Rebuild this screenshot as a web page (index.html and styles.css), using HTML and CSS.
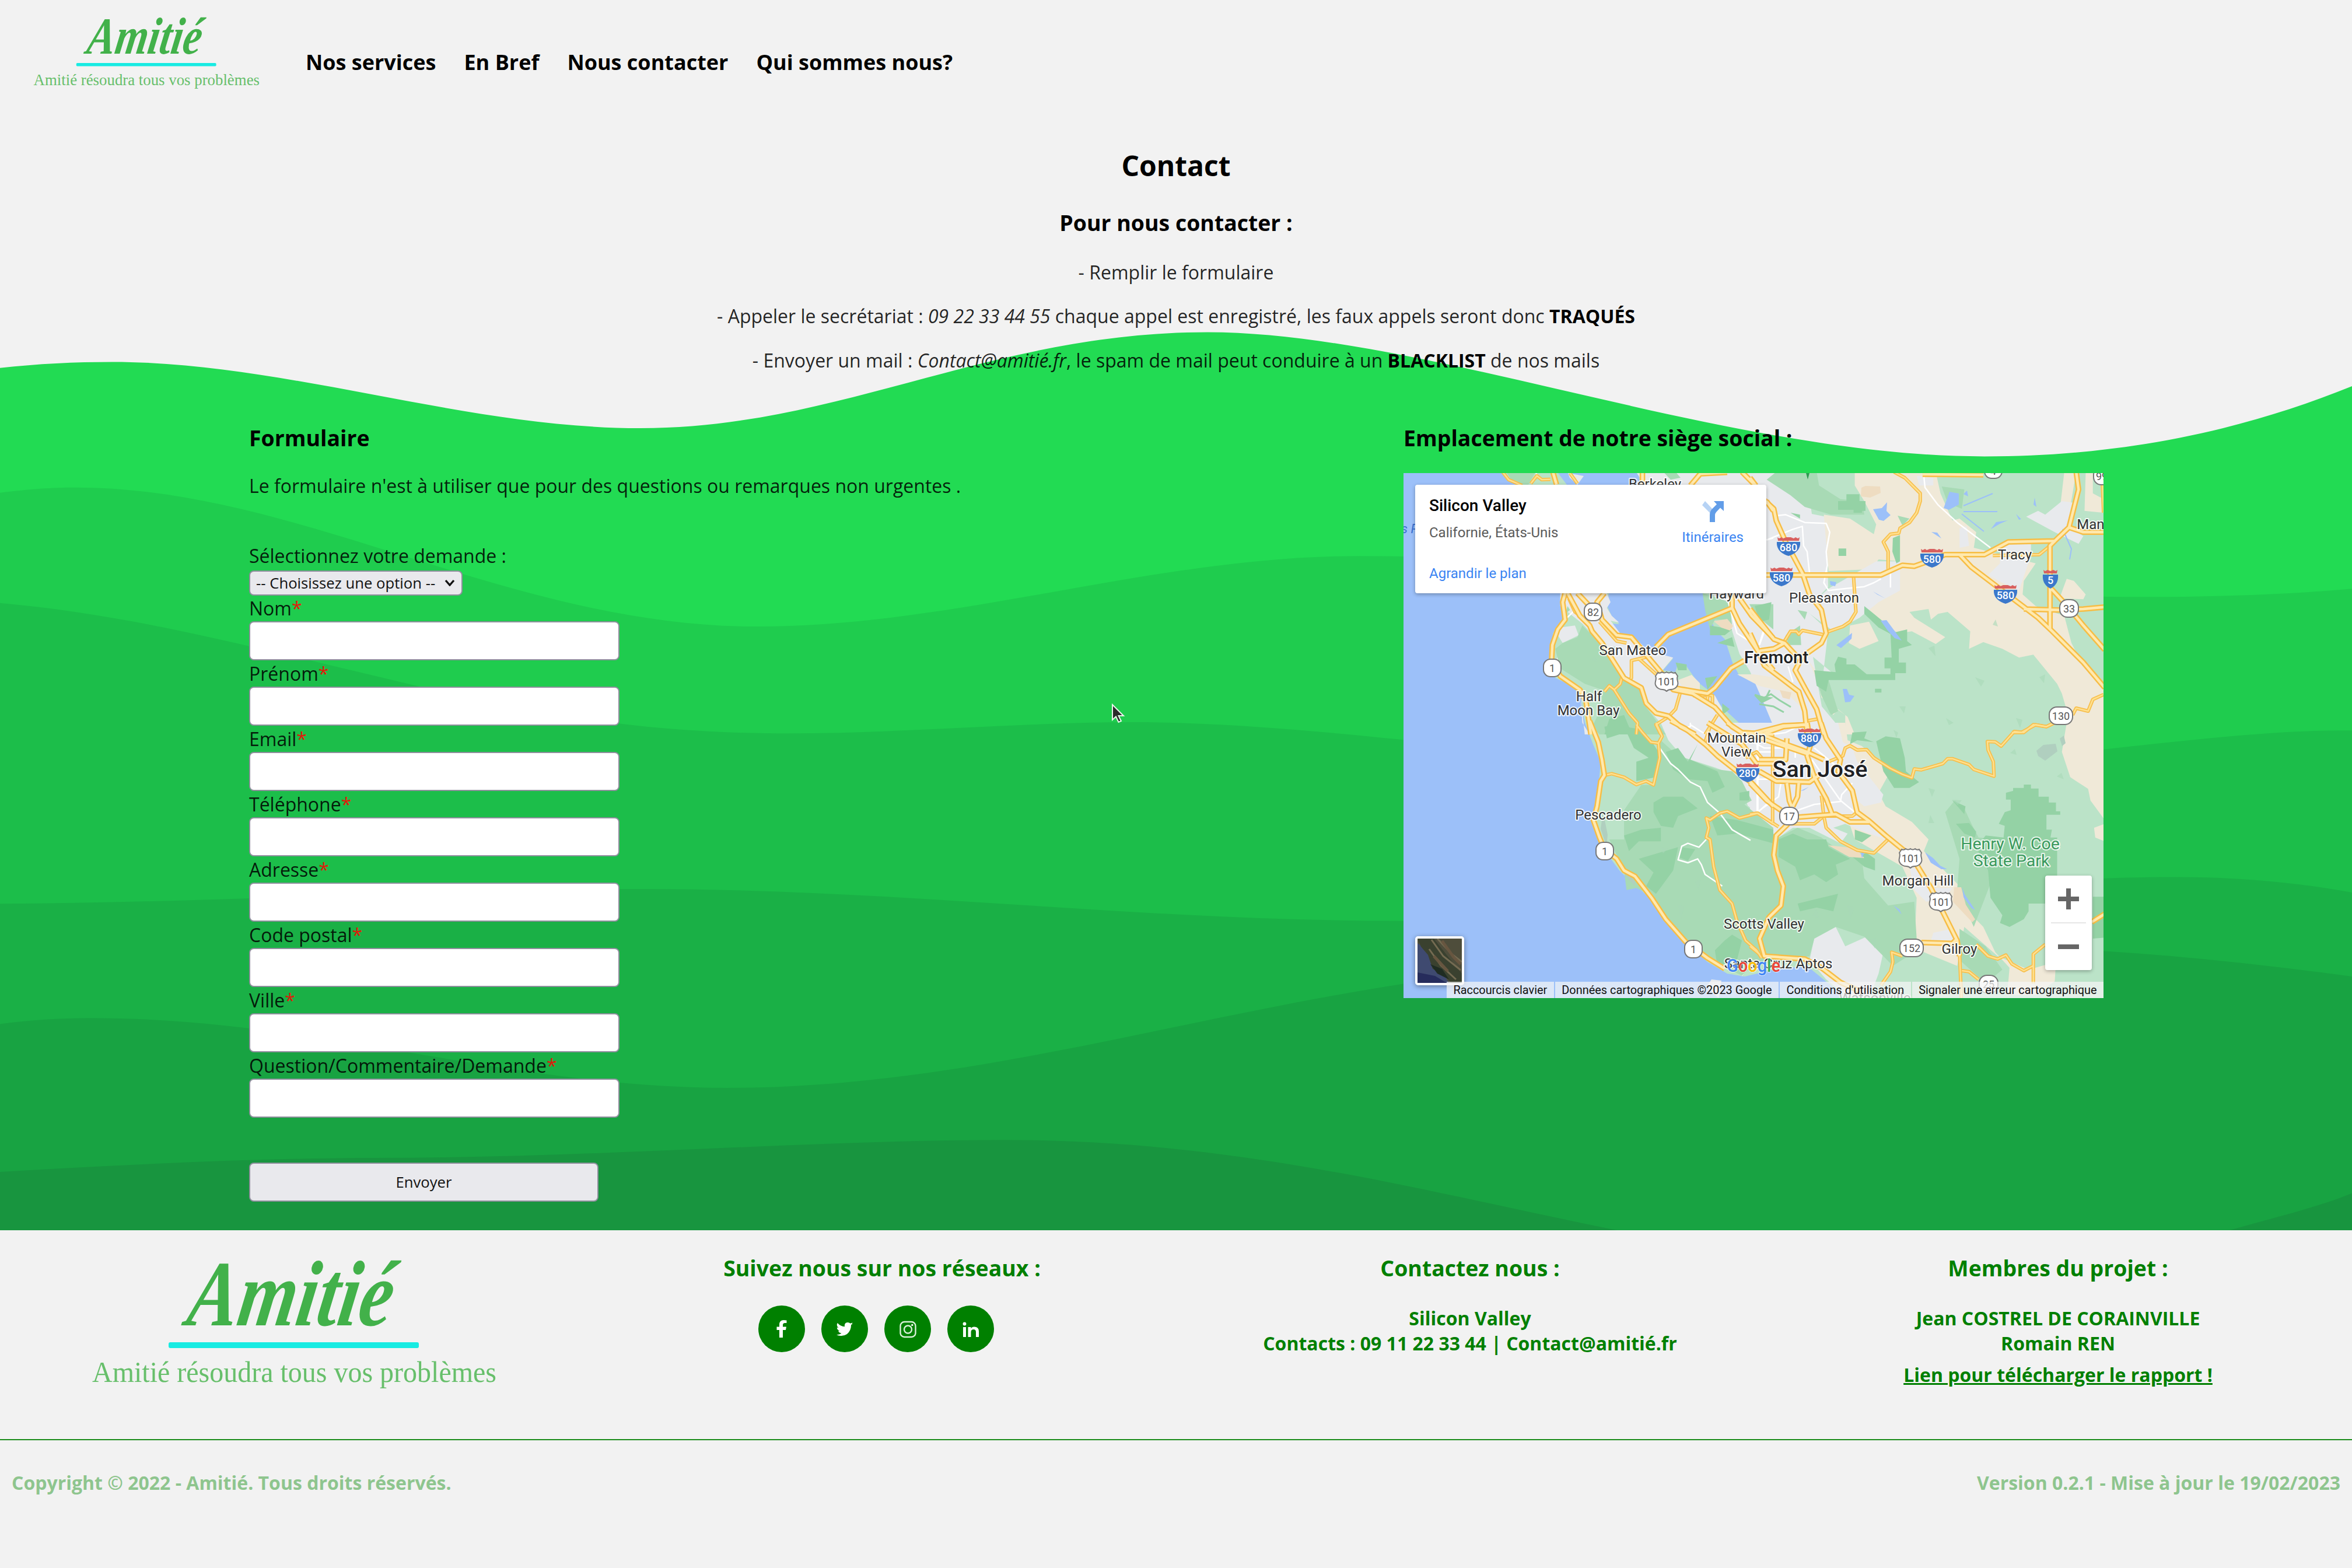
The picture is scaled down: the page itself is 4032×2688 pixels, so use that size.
FILE: index.html
```html
<!DOCTYPE html>
<html lang="fr">
<head>
<meta charset="utf-8">
<title>Amitié - Contact</title>
<link rel="stylesheet" href="styles.css">
</head>
<body>
<svg class="defs" aria-hidden="true">
  <symbol id="logo" viewBox="0 0 700 220" overflow="visible">
    <text class="logo-name" transform="translate(163 114) skewX(-9)" textLength="350" lengthAdjust="spacingAndGlyphs">Amitié</text>
    <rect x="135" y="143" width="429" height="10" rx="3" fill="#18ebe2"/>
    <text class="logo-tag" x="4" y="211" textLength="693" lengthAdjust="spacingAndGlyphs">Amitié résoudra tous vos problèmes</text>
  </symbol>
  <symbol id="interstate" viewBox="-20 -16 40 32">
    <path d="M-19-16l3 2 4-2 3 2 5-2 4-1 4 1 5 2 3-2 4 2 3-2-1 6h-36z" fill="#d8605f"/>
    <path d="M-20-8h40c1 11-6 20-20 24-14-4-21-13-20-24z" fill="#3b78cb"/>
  </symbol>
  <symbol id="us-route" viewBox="-22 -18 44 36">
    <path d="M-15-15q4 2 7-1 4 3 8 0 4 3 8 0 3 3 7 1l4 6c-3 5 2 10 0 15-2 6-8 8-12 8-3 0-5 1-7 3-2-2-4-3-7-3-4 0-10-2-12-8-2-5 3-10 0-15z" fill="#fff" stroke="#777" stroke-width="2"/>
  </symbol>
</svg>

<header class="header">
  <svg class="header-logo" viewBox="0 0 700 220"><use href="#logo"/></svg>
  <nav class="nav">
    <a>Nos services</a><a>En Bref</a><a>Nous contacter</a><a>Qui sommes nous?</a>
  </nav>
</header>

<main class="main">
  <svg class="waves" viewBox="0 0 1568 820.6" preserveAspectRatio="none">
    <path fill="#22db53" d="M0 245.3C25 242.5 50 241.3 75 241.3C190 241.3 310 285.5 427 285.5C560 285.5 660 221.5 805 221.5C950 221.5 1150 304.3 1323 304.3C1420 304.3 1500 285 1568 257.5V821H0Z"/>
    <path fill="#1fcc4e" d="M0 328.5C20 326 35 325 50 325C200 325 340 417.7 504 417.7C640 417.7 770 370.7 905 370.7C1100 370.7 1260 398 1430 398C1480 398 1530 396 1568 392.5V821H0Z"/>
    <path fill="#1cbe4a" d="M0 402C90 410 170 432 281 458C370 479 440 489 526 489C600 489 680 481.5 755 481.5C900 481.5 1050 515 1250 512C1370 508 1480 486 1568 487V821H0Z"/>
    <path fill="#1ab046" d="M0 602.5C140 602 280 592.7 430 592.7C600 592.7 760 614 935 614C1100 614 1300 584.7 1450 584.7C1495 584.7 1535 589 1568 595V821H0Z"/>
    <path fill="#18a342" d="M0 682.7C20 680 40 678.7 60 678.7C210 678.7 340 725.3 485 725.3C640 725.3 780 680 935 656C1080 635 1200 630 1330 631C1420 633 1500 642 1568 651V821H0Z"/>
    <path fill="#18953f" d="M0 781.3C90 776 180 772 250 772C400 772 540 760 670 760C830 760 960 797 1080 820.6H1485C1515 812 1545 805 1568 795.5V821H0Z"/>
  </svg>

  <section class="intro">
    <h2>Contact</h2>
    <h3>Pour nous contacter :</h3>
    <p>- Remplir le formulaire</p>
    <p>- Appeler le secrétariat : <em>09 22 33 44 55</em> chaque appel est enregistré, les faux appels seront donc <strong>TRAQUÉS</strong></p>
    <p>- Envoyer un mail : <em>Contact@amitié.fr</em>, le spam de mail peut conduire à un <strong>BLACKLIST</strong> de nos mails</p>
  </section>

  <div class="columns">
    <section class="form-col">
      <h3>Formulaire</h3>
      <p class="note">Le formulaire n'est à utiliser que pour des questions ou remarques non urgentes .</p>
      <form class="form">
        <div class="select-label">Sélectionnez votre demande :</div>
        <div class="select"><span>-- Choisissez une option --</span>
          <svg viewBox="0 0 18 12"><path d="M2 2l7 8 7-8" fill="none" stroke="#111" stroke-width="3.4"/></svg></div>
        <label class="field"><span>Nom<b>*</b></span><input type="text"></label>
        <label class="field"><span>Prénom<b>*</b></span><input type="text"></label>
        <label class="field"><span>Email<b>*</b></span><input type="text"></label>
        <label class="field"><span>Téléphone<b>*</b></span><input type="text"></label>
        <label class="field"><span>Adresse<b>*</b></span><input type="text"></label>
        <label class="field"><span>Code postal<b>*</b></span><input type="text"></label>
        <label class="field"><span>Ville<b>*</b></span><input type="text"></label>
        <label class="field"><span>Question/Commentaire/Demande<b>*</b></span><input type="text"></label>
        <button class="send" type="button">Envoyer</button>
      </form>
    </section>

    <section class="map-col">
      <h3>Emplacement de notre siège social :</h3>
      <div class="map">
        <svg class="map-canvas" viewBox="0 0 1200 900">
          <defs>
            <g id="major" class="line">
              <g transform="matrix(.42092 0 0 .33333 -26 -32)">
                <path d="M730 713L780 830 820 880 830 910 870 970 910 1050 960 1150 1030 1200 1050 1280 1090 1330 1140 1345 1190 1400 1250 1440"/>
                <path d="M880 713L850 760 870 850 930 930 990 940 1050 1030 1110 1120 1160 1210 1240 1230 1330 1300 1400 1400 1450 1440"/>
                <path d="M720 713L710 760 720 850 690 900 668 980 665 1060 700 1140 780 1210 805 1270 825 1440"/>
                <path d="M1400 790L1140 925 1090 990M1450 1060L1395 1100 1330 1200 1300 1230 1160 1200"/>
                <path d="M1400 700V790L1430 870 1510 1020 1568 1110M1430 740L1480 830 1568 945M770 713L820 780"/>
                <path d="M670 90L685 155M1035 90V170M1230 160L1270 100 1380 92M1440 90L1495 160M1540 240L1568 290"/>
              </g>
              <g transform="matrix(.40816 0 0 .33333 594 -32)">
                <path d="M60 235L100 280 110 340 150 450 220 610 250 720 300 800 320 920 300 970 220 1040 190 1110 230 1200 280 1310 310 1440"/>
                <path d="M60 620H550L640 570 690 575 760 545 820 515 985 515 1085 450 1280 445 1340 375 1380 180 1370 90M1340 375L1400 400H1490"/>
                <path d="M880 515L930 580 1070 710 1210 840 1270 910 1400 1070 1490 1200M1280 445L1260 470V900M1265 690L1340 790 1400 880 1490 1005M1150 795L1300 800 1400 795 1490 785M725 102L980 105"/>
                <path d="M0 920L30 1000 60 1085 130 1150 205 1220 230 1320 240 1440M0 795L100 950 145 970 205 1050M40 1010L100 1000 145 970M0 1440L140 1395 240 1390M0 120L25 160"/>
              </g>
              <g transform="matrix(.42092 0 0 .33333 -26 428)">
                <path d="M820 -10L855 100 870 190 880 270 865 300 850 430 835 500 860 590 880 650 930 700 960 760 1005 790 1075 905 1130 1010 1210 1125 1300 1210 1370 1265"/>
                <path d="M1150 -10L1210 30 1290 110 1340 170 1420 250 1480 310 1568 430M1380 0L1440 50 1568 60M1300 0L1440 110 1500 210H1568M1510 250L1568 290"/>
              </g>
              <g transform="matrix(.40816 0 0 .33333 594 428)">
                <path d="M230 10L140 20 50 60 150 110 240 150 310 190M298 0L320 80 380 190 370 250 430 350 450 460 500 505 570 580 680 690 760 850 870 1120 880 1200"/>
                <path d="M240 0L255 110 240 170 270 280 320 390 345 470M0 60L240 160M40 250L110 300 250 305 290 270M205 305L200 380 180 430M155 310L165 400 175 430M0 310L70 400 130 450"/>
                <path d="M205 485L360 470 420 510 500 510M160 520L110 580 100 680 115 760 140 840 130 940 80 1000 40 1110 60 1200 230 1215 300 1260 380 1335 460 1380M720 1130L850 1135 870 1110"/>
                <path d="M1435 1025L1490 983M155 80L150 190 40 190"/>
              </g>
            </g>
            <g id="minor" class="line">
              <g transform="matrix(.42092 0 0 .33333 -26 -32)">
                <path d="M880 1220L900 1190 920 1210 945 1180 950 1150M920 1210L950 1270 980 1330 1015 1380 1010 1440M1060 1040L990 1060 990 1150 970 1170M1190 1220L1170 1310 1140 1350 1090 1390 1110 1440"/>
                <path d="M465 90L490 130 545 160M580 150L605 110 625 130 660 128M740 97L770 150M735 740L760 810 820 870M1300 1240V1280M1020 1050L1090 1130M860 860L930 960 970 970"/>
                <path d="M1340 1340L1290 1440M1240 1240L1320 1240V1290"/>
              </g>
              <g transform="matrix(.40816 0 0 .33333 594 -32)">
                <path d="M605 90L650 120 715 200 715 240 700 300 670 350 630 380 625 405 590 410 560 450 580 500V590M435 630L445 810 420 860 390 885 320 915M320 930L260 915 220 905 205 925 195 910 170 910 140 970M1020 520L1215 515 1260 470"/>
                <path d="M1485 1235L1440 1260 1420 1320 1370 1305 1355 1340M1280 1380L1245 1400 1200 1390 1140 1430 1100 1430M1480 150L1485 300M240 1370L290 1360"/>
              </g>
              <g transform="matrix(.42092 0 0 .33333 -26 428)">
                <path d="M880 270L910 262 960 280 1010 318 1050 300 1080 320 1105 180 1100 105 1115 70 1090 0M1010 10L1035 50 1070 100 1100 105"/>
                <path d="M1568 520L1505 465 1430 490 1380 455 1350 465 1310 500 1295 490 1305 540 1295 590 1310 600 1325 740 1350 860 1400 930 1420 1020 1455 1120 1500 1170 1520 1210M1455 180L1500 150 1540 210M1310 20L1290 100"/>
              </g>
              <g transform="matrix(.40816 0 0 .33333 594 428)">
                <path d="M95 60V510M300 375L310 480 320 540 380 610 450 655 520 670 580 600M0 470L30 465 120 535M160 520H270L310 480H430L450 460M330 200L390 170 400 130 420 118 450 140 490 138 520 180 590 235 640 265 680 283 690 238 720 242 810 210 830 185 850 185 920 215 940 240 1025 275 1022 200 1000 140 997 97 1030 98 1055 120 1110 45 1150 50 1190 10 1245 20 1270 5"/>
                <path d="M640 1200L595 1180 600 1230 590 1280 550 1350M950 1140L1000 1200 1040 1215 1075 1195 1100 1240 1150 1275 1190 1250 1190 1190 1240 1140M1190 1250V1340M880 1180L888 1420M890 1275L920 1280 960 1320M0 1150L40 1190"/>
              </g>
            </g>
          </defs>
          <rect width="1200" height="900" fill="#9cc0f9"/>
          <!-- land -->
          <path fill="#bbe3c8" d="M168 0L188 12 203 20 215 60 264 190 269 206 272 250 256 275 254 318 260 351 302 371 308 410 311 428 325 465 338 495 332 568 325 595 336 628 353 658 370 681 384 695 388 711 403 711 424 731 445 765 479 801 521 838 555 858 585 863 635 851 692 845 725 872 760 900 1200 900V0Z"/>
          <path fill="#9cc0f9" d="M265 0L280 20 340 120 352 206 349 228 357 245 370 259 358 258 374 278 395 281 412 305 441 311 462 318 445 338 466 341 471 325 485 331 504 358 530 378 546 401 575 428 600 430 640 434 648 430 678 408 647 385 631 365 594 355 600 346 576 348 564 325 551 285 534 268 521 235 513 206 470 100 405 20 403 0Z"/>
          <path fill="#e8eaed" d="M282 0L309 5 298 20 285 8ZM400 0H690L700 70 725 75 728 195 690 235 728 270 720 340 737 344 702 315 717 400 757 448H640L620 400 594 340 576 310 560 260 530 206Z"/>
          <!-- dry hills -->
          <g fill="#f0e9d8" transform="matrix(.40816 0 0 .33333 594 -32)">
            <path d="M440 90H780L800 200 850 340 880 330 950 400 940 480 1200 560 1150 650 1145 720 1200 780 1320 830 1350 970 1400 1090 1490 1200V1440H1330L1350 1400 1310 1230 1290 1180 1190 1030 1130 1045 1060 1000 980 965 920 1000 925 910 830 810 790 820 760 850 750 795 670 810 690 840 820 940 780 975 680 910 620 920 480 780 530 760 620 690 630 550 540 540 510 590 330 600 310 310 420 330 520 410 530 360 480 240 440 160Z"/>
            <path d="M1320 90H1370L1330 380 1300 300ZM1410 90H1440V200L1485 230V300L1405 290ZM1330 640L1360 650 1410 720 1400 745 1300 740ZM420 880L500 860 540 960 460 1000 415 970Z"/>
            <path d="M240 1050L280 1120 300 1250 400 1340 400 1440H440L410 1350 370 1310 350 1340 310 1250 260 1100Z"/>
          </g>
          <g fill="#f0e9d8" transform="matrix(.40816 0 0 .33333 594 428)">
            <path d="M370 0H400L410 90 470 120 590 250 540 360 570 430 680 510 750 600 730 660 800 740 880 840 900 950 980 1050 1030 1180 1090 1260 1080 1400H1200L1280 1330 1285 1230 1170 1270 1040 1200 900 1050 870 1250 690 1160 700 900 640 740 440 600 380 380Z"/>
            <path d="M1330 0H1490V500L1430 400 1420 340 1345 280 1310 150ZM1445 540L1490 520V610L1450 590ZM140 1165L190 1170 190 1210 150 1215Z"/>
          </g>
          <!-- urban -->
          <g fill="#e8eaed">
            <g transform="matrix(.42092 0 0 .33333 -26 -32)">
              <path d="M700 713H890L905 760 890 790 910 830 940 865 905 855 950 930 1000 940 1060 1010 1160 1045 1110 1120 1200 1180 1330 1240 1390 1380 1568 1400V1440H1150L1080 1340 1050 1300 1030 1200 980 1160 930 1090 870 980 790 870 700 780Z"/>
              <path d="M700 890L760 880 775 930 710 970 690 930ZM690 1040L710 1060 700 1110 660 1110ZM690 1150L780 1200 790 1380 820 1440 800 1440 780 1210Z"/>
            </g>
            <path d="M441 428H650V620L590 570 576 521 535 505 479 487 454 458Z"/>
            <g transform="matrix(.40816 0 0 .33333 594 428)">
              <path d="M0 0H370L390 100 430 130 450 200 560 370 550 410 480 430 430 380 460 480 500 510 570 600 480 560 400 520 350 540 410 570 380 620 250 540 180 540 120 590 0 480ZM270 1110L360 1050 400 1150 490 1100 560 1180 540 1290 500 1420 400 1400 320 1320 250 1220ZM670 740L720 760 760 850 850 850 820 900 740 920 690 860ZM770 1080L850 1060 860 1130 760 1120Z"/>
            </g>
            <g transform="matrix(.40816 0 0 .33333 594 -32)">
              <path d="M1160 320L1210 290 1240 310 1310 240 1370 250 1350 380 1400 420 1380 460 1280 400ZM1050 460H1180V520L1130 700 1060 660 1000 620 1050 560ZM880 380L910 370 920 470 880 480ZM530 550H630V700L540 760 460 840 400 880 340 900 230 800 330 690ZM210 380H280V430L240 500 280 500V690H190ZM700 110L770 120V160L710 160Z"/>
            </g>
            <path d="M528 868L545 870 540 900 520 880ZM558 780L585 785V795L562 790ZM581 818H594V845L580 863 581 840ZM525 685L556 680 562 693 546 710 530 705Z"/>
          </g>
          <!-- forest, mid tone -->
          <g fill="#a8dab5">
            <g transform="matrix(.42092 0 0 .33333 -26 -32)">
              <path d="M480 90H600L570 155H545L500 130ZM790 880L870 980 930 1090 960 1160 1040 1220 1050 1300 1080 1350 1130 1440H860L830 1400 870 1300 870 1210 800 1180 700 1100 680 1000 710 970 770 940ZM1280 713L1390 760 1400 880 1370 850 1330 850 1310 900 1290 800ZM1120 90H1170L1190 120 1150 130ZM730 780L740 800 720 820ZM1470 770H1568V900L1500 830Z"/>
            </g>
            <g transform="matrix(.42092 0 0 .33333 -26 428)">
              <path d="M1100 80L1180 170 1340 240 1400 250 1440 300 1480 400 1450 420 1568 540V1150L1440 1300 1300 1220 1120 1000 1060 880 1010 850 970 860 960 760 900 600 960 600 960 450 1030 320 1080 320Z"/>
            </g>
            <g transform="matrix(.40816 0 0 .33333 594 428)">
              <path d="M0 490L120 590 200 540 300 590 400 680 470 700 480 800 580 940 690 920 700 1110 690 1180 600 1250 480 1100 360 1050 270 1110 250 1200 0 1250ZM820 460L860 400 900 440 930 520 960 590 1040 600 1050 700 940 1050 870 860 880 700ZM880 1060L990 1150 1060 1270 990 1340 880 1220Z"/>
            </g>
            <g transform="matrix(.40816 0 0 .33333 594 -32)">
              <path d="M70 130L110 90 280 90 290 160 380 230 470 240 480 310 340 310 230 270 170 210ZM150 930L210 880 215 980 160 980ZM200 800L240 810 230 850ZM620 315L670 330 640 365ZM805 165L900 180 890 280 830 250ZM270 1110L330 1160 370 1320 340 1340 300 1240Z"/>
            </g>
          </g>
          <!-- forest, deep tone -->
          <g fill="#94d2a5">
            <g transform="matrix(.40816 0 0 .33333 594 -32)">
              <path d="M370 240H405V205H460V240H485V290H470V300H435V285H370ZM600 430L630 415V550L615 560 598 500ZM372 484H404V522H372ZM590 920L660 900V960L680 980 625 1000V1070H655V1125H610V1160H330L320 1220 280 1190 270 1110 360 1120 355 1080 370 1040 405 1050V1080H440L490 1130H590V1100H565V1045H595ZM480 780L520 820 560 860 630 940 600 930 540 890 480 820ZM20 780L90 760 80 850 40 860ZM525 1205H552V1225H525ZM170 300L210 310 210 330Z"/>
            </g>
            <g transform="matrix(.40816 0 0 .33333 594 428)">
              <path d="M530 95L570 70 630 80 650 180 655 250 710 305 670 335 605 335 560 250ZM430 50L490 45 480 80 520 100 450 90 420 110ZM1075 360L1105 350V335H1150V318H1180V338H1212V380H1255V410H1285V455H1303V473H1245V550H1268L1262 590H1290V830H1240V930H1170V970L1150 1010 1090 1050 1050 1030 1060 990 1010 900 1000 760 950 640 990 580 1065 590 1070 530 1045 520 1070 460 1095 450 1095 395H1075ZM865 520L920 515 950 560 945 590 900 570ZM850 400L905 430 900 470ZM440 550L510 580 470 615 440 600ZM120 600L180 570 240 600 320 600 330 640 420 700 360 730 370 780 320 820 270 780 210 810 190 740 120 690ZM430 690L490 670 525 700V760L480 740ZM200 930L300 900 370 880 350 970 280 950 210 970ZM1440 895H1490V1105L1440 1110Z"/>
            </g>
            <g transform="matrix(.42092 0 0 .33333 -26 428)">
              <path d="M880 20L960 0 940 60 890 80ZM960 20L1010 30 1080 110 1100 150 1090 280 1010 300 1010 200 1060 180 1000 130ZM1130 150L1180 130 1220 200 1260 110 1230 190 1340 250 1370 330 1320 360 1300 300 1220 290 1160 240ZM1080 410L1120 380 1200 380 1260 440 1180 480 1160 540 1110 530 1080 460ZM960 580L1030 550 1110 540 1110 610 1020 610 980 660ZM1020 700L1180 640 1160 760 1090 880 1050 840 1080 770ZM1310 480L1420 500 1568 550V620L1420 570 1340 580ZM1190 640L1250 650 1220 710 1180 690ZM1370 1120L1400 1090 1440 1120 1420 1220 1340 1250 1330 1170ZM1430 360L1470 350 1470 400 1430 400Z"/>
            </g>
            <g transform="matrix(.42092 0 0 .33333 -26 -32)">
              <path d="M1310 880L1400 900 1370 930 1310 930ZM1340 970L1400 940 1410 990ZM1170 1070L1215 1080 1215 1110 1180 1110ZM1290 1150L1340 1140 1300 1210ZM1360 1280L1390 1310 1360 1340ZM1490 1240L1568 1250 1520 1280ZM900 1360L960 1340 980 1400 1000 1440H880Z"/>
            </g>
          </g>
          <!-- salt ponds, sand and lakes -->
          <path fill="#f0e9d8" d="M470 355L494 346 508 360 508 372 480 368ZM572 345L600 345 634 350 680 375 690 410 655 375 610 365Z"/>
          <path fill="#eedcc1" d="M785 25L792 22 817 23 818 34 800 42 784 40ZM532 254L555 250 565 262 560 270 545 265ZM728 638L775 643 790 660 764 658ZM944 710L956 710 964 740 980 765 975 770 942 735ZM645 372L665 376 662 388 650 385Z"/>
          <path fill="#9cc0f9" d="M805 62L820 60 829 50 828 65 835 72 823 82 815 80ZM936 32L952 35 952 54 935 63 926 60ZM966 30L968 40 960 36ZM1007 96L1016 84 1036 81 1022 87ZM1050 70L1059 79 1055 80ZM1080 54L1082 42 1085 58ZM905 101L915 102 922 112ZM742 295L769 274 768 284 750 300ZM818 253L828 252 854 287 842 283 830 270ZM753 370L760 370 764 380 773 382 766 392 757 393ZM731 185L742 187 740 194 732 192ZM805 203L826 215 812 208ZM894 650L908 660 920 673 932 679 922 679 904 668ZM958 710L962 722 980 749 974 746 960 727ZM784 651L790 651 786 660ZM840 741L850 748 854 757ZM680 545L695 538 686 544Z"/>
          <path fill="#b0cfbf" d="M1085 476L1097 466 1118 464 1121 477 1100 493 1088 485ZM1125 455L1132 450 1135 463 1129 468ZM342 580L350 620 348 640 338 610ZM370 670L395 690 397 708 380 690Z"/>
          <path class="ripples" d="M960 56L1010 35M960 66H1018M957 70L995 100M1130 96L1145 130 1142 148"/>
          <path d="M602 380l16 5 12-6 14 10 20 12M610 396l24 4 18 10M628 372l-8 16" fill="none" stroke="#94d2a5" stroke-width="3"/>
          <path class="texture" d="M850 400l8 12 3-12zM900 300l12 14-2-18zM980 350l10 16 6-10zM1010 260l9 3-4-12zM930 420l5 12 8-4zM840 440l5 14 3-9zM1050 420l7 17 4-14zM1090 350l8 10 2-15zM940 560l10 9 7-8zM900 540l6 15 5-12zM1040 480l8-7 3 10zM1120 520l12 5-4-11zM900 600l3-14 7 14zM760 740l6 24 7-19zM800 800l8 15 3-18zM700 760l8-12 4 14zM470 740l6 24 5-21zM500 700l5 14 5-17zM440 640l5 12 8-8zM350 300l8 10 6-13zM320 320l11 4-2-11z"/>
          <!-- local roads -->
          <g class="line local">
            <g transform="matrix(.40816 0 0 .33333 594 -32)"><path d="M730 110L735 170 790 260 870 350 1010 480M110 315L150 310 230 350 320 355 335 400 320 500 325 570 310 660 330 700 400 690 480 680 520 660 550 640M590 610V685M70 440L180 385 220 370 225 470 240 500 250 610M40 980L60 910M160 1090L180 1170"/></g>
            <g transform="matrix(.42092 0 0 .33333 -26 428)"><path d="M1105 130L1150 210 1180 240 1230 305 1270 330 1300 410 1350 465 1400 550 1475 605M1295 600L1265 640 1220 620 1195 635 1180 705 1220 720 1260 700 1275 730 1290 780 1360 840M1505 80V460L1540 420M1230 0V20L1190 30M1230 10L1330 90M1500 290H1568"/></g>
            <g transform="matrix(.40816 0 0 .33333 594 428)"><path d="M30 60V460L120 380 130 310M30 150H90M0 90L60 130 190 130 190 180M0 280H40M260 190L380 400 440 460M200 450L270 420 380 405 385 370 430 310M90 60L150 50 200 20M270 130L370 230"/></g>
            <g transform="matrix(.42092 0 0 .33333 -26 -32)"><path d="M1380 740L1420 920 1470 960 1520 1000M1530 900L1510 980M720 850L760 800M600 90L610 120M1540 440L1568 430"/></g>
          </g>
          <use href="#minor" class="minor-edge"/><use href="#minor" class="minor-fill"/>
          <use href="#major" class="major-edge"/><use href="#major" class="major-fill"/>
          <path d="M689 -4H697L693 11Z" fill="#2d9a50"/>

          <g class="shield">
            <rect x="310" y="223" width="30" height="30" rx="12"/><rect x="240" y="319" width="30" height="30" rx="12"/>
            <rect x="1125" y="217" width="32" height="30" rx="13"/><rect x="1107" y="401" width="40" height="30" rx="13"/>
            <rect x="330" y="633" width="30" height="30" rx="12"/><rect x="482" y="801" width="30" height="30" rx="12"/>
            <rect x="645" y="573" width="32" height="30" rx="13"/><rect x="851" y="799" width="40" height="30" rx="13"/>
            <rect x="987" y="861" width="32" height="30" rx="13"/><rect x="996" y="-21" width="30" height="30" rx="12"/><rect x="1183" y="-10" width="40" height="30" rx="13"/>
          </g>
          <use href="#us-route" x="429" y="339" width="44" height="36"/><use href="#us-route" x="847" y="642" width="44" height="36"/><use href="#us-route" x="899" y="717" width="44" height="36"/>
          <use href="#interstate" x="640" y="110" width="40" height="32"/><use href="#interstate" x="628" y="162" width="40" height="32"/><use href="#interstate" x="886" y="130" width="40" height="32"/><use href="#interstate" x="1012" y="192" width="40" height="32"/>
          <g transform="translate(1109 182)"><path d="M-12-16l3 2 4-2 5 2 5-2 4 2 3-2-1 6h-22z" fill="#d8605f"/><path d="M-13-8h26c1 11-3 19-13 24-10-5-14-13-13-24z" fill="#3b78cb"/></g>
          <use href="#interstate" x="676" y="438" width="40" height="32"/><use href="#interstate" x="570" y="498" width="40" height="32"/>
          <g class="num">
            <text x="325" y="245">82</text><text x="255" y="341">1</text><text x="451" y="364">101</text><text x="1141" y="239">33</text><text x="1127" y="423">130</text><text x="345" y="655">1</text><text x="497" y="823">1</text><text x="661" y="595">17</text><text x="869" y="667">101</text><text x="921" y="742">101</text><text x="871" y="821">152</text><text x="1003" y="883">25</text><text x="1011" y="3">4</text><text x="1197" y="12">99</text>
          </g>
          <g class="num inter">
            <text x="660" y="134">680</text><text x="648" y="186">580</text><text x="906" y="154">580</text><text x="1032" y="216">580</text><text x="1109" y="190">5</text><text x="696" y="461">880</text><text x="590" y="521">280</text>
          </g>
          <g class="place">
            <text x="431" y="27">Berkeley</text><text x="571" y="215">Hayward</text><text x="393" y="312">San Mateo</text><text x="318" y="391">Half</text><text x="317" y="415">Moon Bay</text>
            <text x="721" y="222">Pleasanton</text><text x="1048" y="148">Tracy</text><text x="1201" y="96">Manteca</text><text x="571" y="462">Mountain</text><text x="571" y="486">View</text><text x="351" y="594">Pescadero</text><text x="618" y="781">Scotts Valley</text><text x="608" y="849">Santa Cruz</text><text x="704" y="849">Aptos</text><text x="882" y="707">Morgan Hill</text><text x="953" y="824">Gilroy</text><text x="808" y="908">Watsonville</text>
            <text class="town" x="639" y="326">Fremont</text><text class="city" x="714" y="521">San José</text>
            <text class="park" x="1040" y="645">Henry W. Coe</text><text class="park" x="1042" y="674">State Park</text>
          </g>
          <text class="sea" x="-4" y="103">s P</text>
          <text class="google" x="554" y="855" textLength="92" lengthAdjust="spacingAndGlyphs"><tspan fill="#4285f4">G</tspan><tspan fill="#ea4335">o</tspan><tspan fill="#fbbc05">o</tspan><tspan fill="#4285f4">g</tspan><tspan fill="#34a853">l</tspan><tspan fill="#ea4335">e</tspan></text>
        </svg>

        <div class="place-card">
          <div class="place-info"><strong>Silicon Valley</strong><span>Californie, États-Unis</span><a>Agrandir le plan</a></div>
          <div class="directions">
            <svg viewBox="0 0 38 36"><path d="M1 7L6 0 20 15 15 21Z" fill="#b7d3f5"/><path d="M21 0H38V17L32 11.500L25 19Q23 21 23 25V36H14V24Q14 17 19 12.500L26 5.500Z" fill="#629de8"/></svg>
            <a>Itinéraires</a>
          </div>
        </div>
        <div class="zoom">
          <svg viewBox="0 0 80 162"><path d="M22 40H58M40 22V58M22 122H58" stroke="#666" stroke-width="8"/><path d="M10 81H70" stroke="#e6e6e6" stroke-width="2"/></svg>
        </div>
        <svg class="satellite" viewBox="0 0 76 76">
          <rect width="76" height="76" fill="#4e4d3b"/>
          <path d="M0 8L14 18 20 32 28 50 48 66 54 76H0Z" fill="#3f4a70"/><path d="M0 58L30 64 50 76H0Z" fill="#262c5c"/>
          <path d="M0 0H28L50 28 76 60V76H58L44 60 26 52 18 28 6 14Z" fill="#3a412f"/>
          <path d="M24 2L44 30 74 54M34 0L58 26 76 40M20 18L40 46 66 70" fill="none" stroke="#746b52" stroke-width="3"/>
          <path d="M42 4L62 32 74 44M28 30L52 56" fill="none" stroke="#675640" stroke-width="5"/><path d="M22 44L42 52 54 70 34 60Z" fill="#1f2c22"/>
        </svg>
        <div class="credits"><span>Raccourcis clavier</span><span>Données cartographiques ©2023 Google</span><span>Conditions d'utilisation</span><span>Signaler une erreur cartographique</span></div>
      </div>
    </section>
  </div>
</main>

<footer class="footer">
  <div class="footer-cols">
    <div class="footer-col brand"><svg class="footer-logo" viewBox="0 0 700 220"><use href="#logo"/></svg></div>
    <div class="footer-col">
      <h3>Suivez nous sur nos réseaux :</h3>
      <div class="socials">
        <a><svg viewBox="0 0 80 80"><path d="M36 55V42H31.500V36.500H36V33Q36 25 43.500 25Q46 25 48.500 25.500V30H45.500Q42 30 42 33.500V36.500H48L47 42H42V55Z" fill="#fff"/></svg></a>
        <a><svg viewBox="0 0 80 80"><path d="M54 32Q52.500 33 51 33.300V34Q51 43 44 49Q39 52.500 33 52Q29 52 26 50Q31 50.500 34.500 47.500Q30 47 29 43.500H31.500Q27 42 26.800 37.500L29.500 38.200Q25 34.500 27.700 30Q33 36 40 36.300Q39 29.500 45 29Q48 29 49.700 30.800L53.500 29.400Q53 31.500 51.200 32.700Z" fill="#fff"/></svg></a>
        <a><svg viewBox="0 0 80 80"><g fill="none" stroke="#d9efd9" stroke-width="2.400"><rect x="27.500" y="28" width="26" height="26" rx="7"/><circle cx="40.500" cy="41" r="6.500"/></g><circle cx="47.800" cy="33.500" r="1.700" fill="#fff"/></svg></a>
        <a><svg viewBox="0 0 80 80"><path d="M27 37H32V54H27ZM35.500 37H40.500V39.500Q42 36.600 46 36.600Q54 36.600 54 44.500V54H49V45.500Q49 41 45 41Q40.500 41 40.500 45.500V54H35.500Z" fill="#fff"/><circle cx="29.500" cy="31.500" r="2.900" fill="#fff"/></svg></a>
      </div>
    </div>
    <div class="footer-col"><h3>Contactez nous :</h3><p>Silicon Valley</p><p>Contacts : 09 11 22 33 44 | Contact@amitié.fr</p></div>
    <div class="footer-col"><h3>Membres du projet :</h3><p>Jean COSTREL DE CORAINVILLE</p><p>Romain REN</p><p class="report">Lien pour télécharger le rapport !</p></div>
  </div>
  <div class="legal"><span>Copyright © 2022 - Amitié. Tous droits réservés.</span><span>Version 0.2.1 - Mise à jour le 19/02/2023</span></div>
</footer>
<svg class="cursor" viewBox="0 0 24 34"><path d="M2 2V28L8 22.500L12.500 32L17 30L12.500 21H21Z" fill="#2b2b2b" stroke="#e8f5ea" stroke-width="2"/></svg>
</body>
</html>
```

FILE: styles.css
```css
* { box-sizing: border-box; }
body { margin: 0; height: 2688px; background: #f2f2f2; color: #000; font: 32px/43.58px "Open Sans", "Noto Sans", sans-serif; position: relative; overflow-x: hidden; }
.defs { position: absolute; width: 0; height: 0; }
h2 { font-size: 48px; line-height: 65.4px; margin: 0 0 39.8px; }
h3 { font-size: 37.44px; line-height: 51px; margin: 0 0 37.44px; }
p { margin: 0; }

.logo-name { font: italic bold 160px "Liberation Serif", serif; fill: #42b14a; }
.logo-tag { font: 50px "Liberation Serif", serif; fill: #67bf6b; }

.header { height: 212px; padding: 28px 0 0 55px; display: flex; align-items: flex-start; }
.header-logo { width: 392px; height: 123px; flex: none; overflow: visible; }
.nav { display: flex; gap: 48px; padding: 53px 0 0 77px; font-size: 36px; line-height: 52px; font-weight: bold; }

.main { height: 1897px; }
.waves { position: absolute; left: 0; top: 0; width: 4032px; height: 2110px; z-index: -1; }
.intro { padding-top: 39px; text-align: center; }
.intro p { margin-bottom: 32px; color: rgba(0, 0, 0, .87); }
.intro strong { color: #000; }
.columns { display: grid; grid-template-columns: 1979px 1200px; padding: 54px 0 0 427px; }
.note { margin: -3px 0 77px; color: rgba(0, 0, 0, .87); }
.form { color: rgba(0, 0, 0, .87); }
.select-label { margin-bottom: 3px; }
.select { width: 366px; height: 43px; border: 2px solid #8f8f9d; border-radius: 8px; background: #e9e9ed; color: #111; font-size: 25.7px; line-height: 37px; padding: 0 11px 0 10px; display: flex; justify-content: space-between; align-items: center; white-space: nowrap; }
.select svg { width: 18px; height: 12px; }
.field { display: flex; flex-direction: column; gap: .5px; height: 112px; }
.field b { color: #f00; font-weight: normal; opacity: .87; }
.field input { width: 635px; height: 67px; border: 2px solid #8f8f9d; border-radius: 8px; background: #fff; }
.send { display: block; margin-top: 76px; width: 599px; height: 67px; border: 2px solid #8f8f9d; border-radius: 8px; background: #e9e9ed; color: #111; font: 25.7px "Open Sans", sans-serif; }

.map-col h3 { margin-bottom: 35px; }
.map { position: relative; width: 1200px; height: 900px; overflow: hidden; font-family: Roboto, sans-serif; }
.map-canvas { display: block; width: 1200px; height: 900px; }
.line path { vector-effect: non-scaling-stroke; fill: none; stroke-linejoin: round; }
.local { stroke: #fff; stroke-width: 2.5; }
.minor-edge { stroke: #f7bf4c; stroke-width: 6; }
.minor-fill { stroke: #ffe08f; stroke-width: 2.5; }
.major-edge { stroke: #f7bd45; stroke-width: 9.5; }
.major-fill { stroke: #ffe9ae; stroke-width: 4.5; }
.ripples { fill: none; stroke: #9cc0f9; stroke-width: 2; }
.texture { fill: #a9d8b8; opacity: .6; }
.shield rect { fill: #fff; stroke: #777; stroke-width: 2; }
.num text { font-size: 18px; text-anchor: middle; fill: #555; }
.inter text { fill: #fff; font-weight: 500; }
.place text { font-size: 24px; text-anchor: middle; fill: #333; stroke: #fff; stroke-width: 4; stroke-opacity: .8; stroke-linejoin: round; paint-order: stroke; }
.place .town { font-size: 29.5px; font-weight: 500; fill: #202124; }
.place .city { font-size: 39.5px; font-weight: 500; fill: #202124; }
.place .park { font-size: 28.5px; fill: #3a995c; }
.sea { font-size: 22px; font-style: italic; fill: #3b6fd0; }
.google { font: 500 31px Roboto, sans-serif; stroke: #fff; stroke-width: 2; stroke-opacity: .7; paint-order: stroke; }

.place-card { position: absolute; left: 20px; top: 20px; width: 602px; height: 186px; padding: 20px 39px 0 24px; background: #fff; border-radius: 4px; box-shadow: 0 2px 6px rgba(0, 0, 0, .3); display: flex; justify-content: space-between; font-size: 24px; line-height: 32px; }
.place-info { display: flex; flex-direction: column; }
.place-info strong { font-size: 28px; font-weight: 500; line-height: 32px; }
.place-info span { margin-top: 14px; color: #5b5b5b; }
.place-card a { color: #3a84f2; }
.place-info a { margin-top: 38px; }
.directions { display: flex; flex-direction: column; align-items: center; padding-top: 8px; }
.directions svg { width: 38px; height: 36px; margin-bottom: 10px; }
.zoom { position: absolute; right: 20px; top: 690px; width: 80px; height: 162px; background: #fff; border-radius: 4px; box-shadow: 0 2px 6px rgba(0, 0, 0, .3); }
.zoom svg { display: block; }
.satellite { position: absolute; left: 20px; top: 794px; width: 84px; height: 84px; border: 4px solid #fff; border-radius: 5px; box-shadow: 0 2px 8px rgba(0, 0, 0, .4); }
.credits { position: absolute; right: 0; bottom: 0; height: 28px; display: flex; gap: 2px; font-size: 19.9px; line-height: 30px; color: #111; white-space: nowrap; }
.credits span { background: rgba(245, 245, 245, .72); padding: 0 11.5px; }

.footer { color: green; font-weight: bold; text-align: center; background: #f2f2f2; }
.footer-cols { height: 360px; display: grid; grid-template-columns: repeat(4, 1fr); border-bottom: 2px solid #1a8c1a; }
.footer-col { padding-top: 39px; }
.footer-col h3 { margin-bottom: 38.5px; }
.brand { padding-top: 49px; }
.footer-logo { width: 700px; height: 220px; overflow: visible; }
.socials { display: flex; justify-content: center; gap: 28px; margin-right: 20px; }
.socials a { width: 80px; height: 80px; border-radius: 50%; background: green; }
.footer-col .report { margin-top: 10px; text-decoration: underline; }
.legal { display: flex; justify-content: space-between; padding: 51px 20px 0; color: #8ec58e; }
.cursor { position: absolute; left: 1905px; top: 1206px; width: 24px; height: 34px; }
```
